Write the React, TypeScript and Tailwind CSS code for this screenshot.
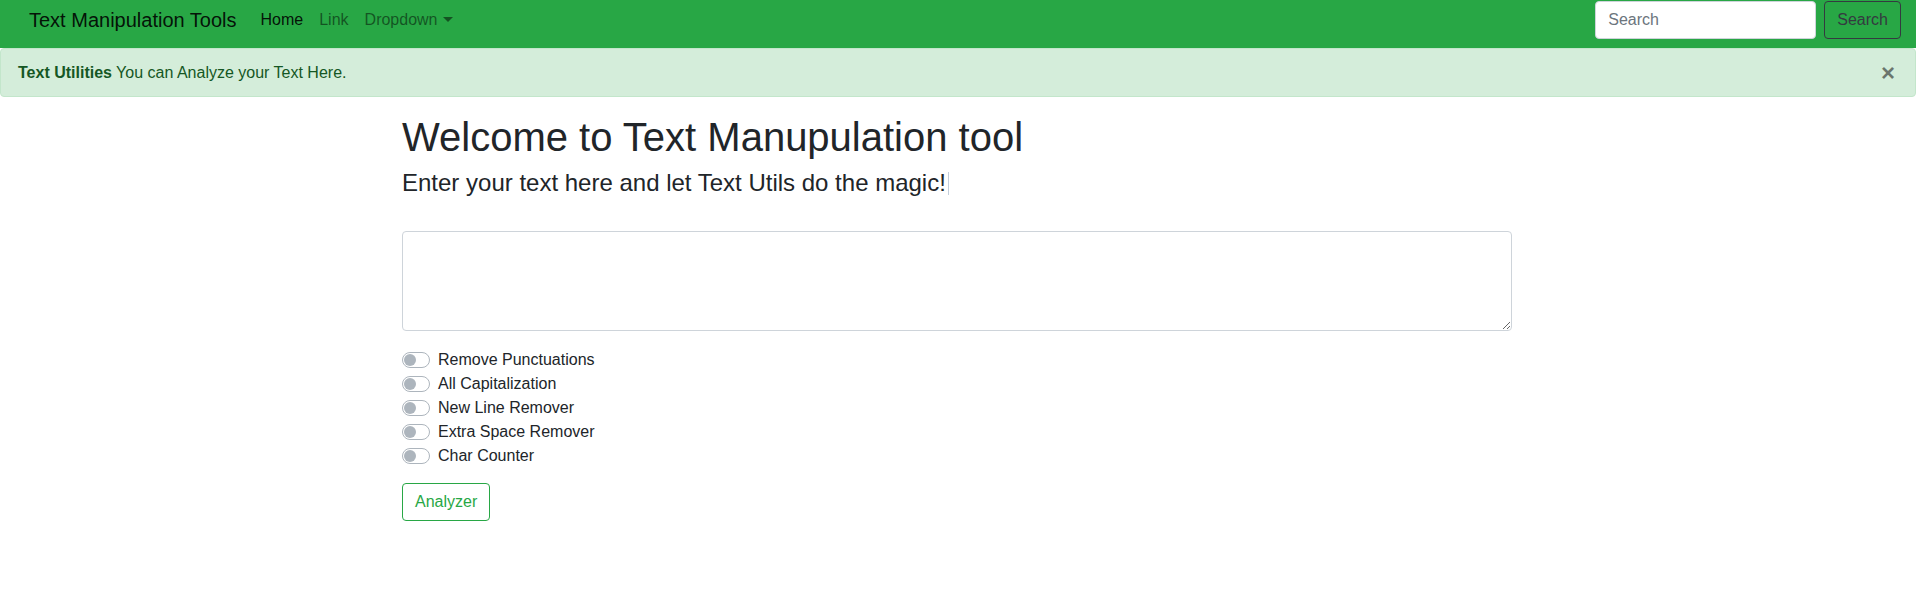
import { useState } from "react";

const options = [
  "Remove Punctuations",
  "All Capitalization",
  "New Line Remover",
  "Extra Space Remover",
  "Char Counter",
];

function Switch({ label }: { label: string }) {
  const [on, setOn] = useState(false);
  return (
    <label className="flex h-6 items-center cursor-pointer select-none">
      <span
        onClick={() => setOn(!on)}
        className={
          "relative mr-2 h-4 w-7 shrink-0 rounded-full border " +
          (on ? "border-[#28a745] bg-[#28a745]" : "border-[#adb5bd] bg-white")
        }
      >
        <span
          className={
            "absolute top-[1px] h-3 w-3 rounded-full " +
            (on ? "left-[13px] bg-white" : "left-[1px] bg-[#adb5bd]")
          }
        />
      </span>
      <span className="text-base leading-6">{label}</span>
    </label>
  );
}

export default function App() {
  const [open, setOpen] = useState(true);
  const [text, setText] = useState("");

  return (
    <div className="min-h-screen bg-white font-['Liberation_Sans',Arial,sans-serif] text-[#212529]">
      <nav className="h-12 bg-[#28a745] pl-[29px] pr-[15px]">
        <div className="flex h-10 items-center">
          <a href="#" className="mr-4 text-[20px] leading-[30px] text-black/90">
            Text Manipulation Tools
          </a>
          <ul className="flex items-center text-base leading-6">
            <li>
              <a href="#" className="px-2 text-black/90">
                Home
              </a>
            </li>
            <li>
              <a href="#" className="px-2 text-black/50">
                Link
              </a>
            </li>
            <li>
              <a href="#" className="flex items-center px-2 text-black/50">
                Dropdown
                <span className="ml-[5px] mb-[2px] h-0 w-0 border-x-[5px] border-t-[5px] border-x-transparent border-t-black/50" />
              </a>
            </li>
          </ul>
          <form className="ml-auto flex items-center gap-2">
            <input
              type="search"
              placeholder="Search"
              className="h-[38px] w-[221px] rounded border border-[#ced4da] bg-white px-3 text-base text-[#495057] outline-none placeholder:text-[#6c757d]"
            />
            <button
              type="button"
              className="h-[38px] rounded border border-[#343a40] px-3 text-base text-[#343a40]"
            >
              Search
            </button>
          </form>
        </div>
      </nav>

      {open && (
        <div className="flex h-[49px] items-center justify-between rounded border border-[#c3e6cb] bg-[#d4edda] pl-[17px] pr-5 text-base leading-6 text-[#155724]">
          <div>
            <strong className="font-bold">Text Utilities</strong> You can Analyze your Text Here.
          </div>
          <button
            type="button"
            onClick={() => setOpen(false)}
            className="text-[24px] font-bold leading-none text-black/50"
          >
            ×
          </button>
        </div>
      )}

      <main className="mx-auto mt-4 w-[1140px] pl-[14px] pr-[16px]">
        <h1 className="mb-2 text-[40px] font-medium leading-[1.2]">Welcome to Text Manupulation tool</h1>
        <h4 className="flex items-center text-[24px] font-medium leading-[1.2]">
          Enter your text here and let Text Utils do the magic!
          <span className="ml-[2px] inline-block h-[23px] w-px bg-[#c3cedb]" />
        </h4>
        <textarea
          value={text}
          onChange={(e) => setText(e.target.value)}
          className="mt-[33px] block h-[100px] w-full rounded border border-[#ced4da] px-3 py-[6px] text-base outline-none"
        />
        <div className="mt-[17px] flex flex-col">
          {options.map((o) => (
            <Switch key={o} label={o} />
          ))}
        </div>
        <button
          type="button"
          className="mt-[15px] h-[38px] rounded border border-[#28a745] px-3 text-base text-[#28a745]"
        >
          Analyzer
        </button>
      </main>
    </div>
  );
}
